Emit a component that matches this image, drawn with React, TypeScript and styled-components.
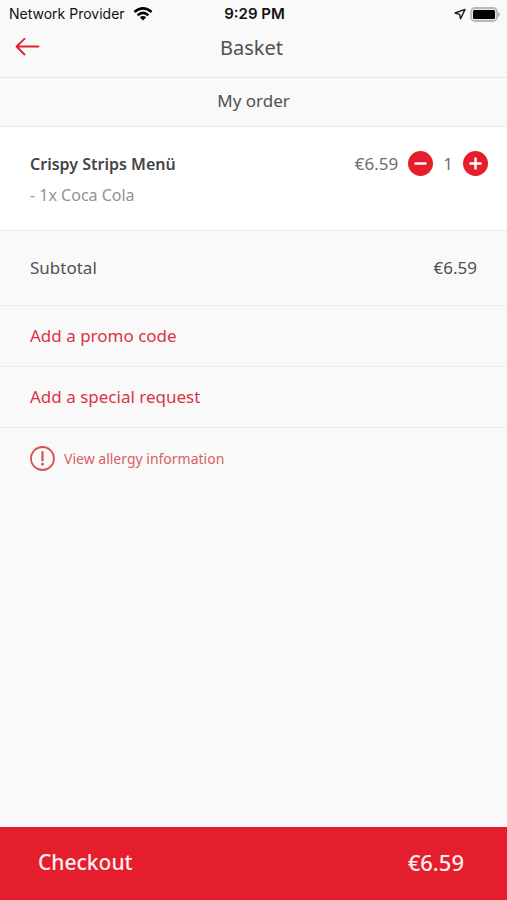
import { useState } from 'react';
import styled, { createGlobalStyle } from 'styled-components';

const red = '#e41e2d';
const line = '#ececec';
const ink = '#505052';

const GlobalStyle = createGlobalStyle`
  * { box-sizing: border-box; }
  body { margin: 0; background: #f9f9f9; }
  button { font: inherit; color: inherit; border: 0; padding: 0; background: none; cursor: pointer; }
  h1, h2, h3, p { margin: 0; font-weight: 400; }
  svg { display: block; }
`;

const Page = styled.div`
  display: flex;
  flex-direction: column;
  min-height: 100vh;
  background: #f9f9f9;
  color: ${ink};
  font-family: 'Noto Sans', sans-serif;
  font-size: 17px;
  line-height: 24px;
`;

const StatusBar = styled.div`
  display: grid;
  grid-template-columns: 1fr auto 1fr;
  align-items: center;
  padding: 4px 7px 4px 9px;
  color: #111;
  font-family: Inter, sans-serif;
  font-size: 14px;
  line-height: 20px;
`;

const StatusGroup = styled.div<{ $end?: boolean }>`
  display: flex;
  align-items: center;
  justify-content: ${(p) => (p.$end ? 'flex-end' : 'flex-start')};
  gap: ${(p) => (p.$end ? 4 : 8)}px;
`;

const Clock = styled.time`
  font-size: 15px;
  font-weight: 600;
`;

const Header = styled.header`
  display: grid;
  grid-template-columns: 1fr auto 1fr;
  align-items: center;
  padding: 4px 14px 14px;
  border-bottom: 1px solid #e4e4e4;
`;

const BackButton = styled.button`
  justify-self: start;
`;

const Title = styled.h1`
  padding-right: 4px;
  font-size: 20px;
  line-height: 31px;
`;

const SectionTitle = styled.h2`
  padding: 11px 16px 13px;
  border-bottom: 1px solid ${line};
  font-size: 17px;
  text-align: center;
`;

const Item = styled.section`
  display: flex;
  align-items: flex-start;
  justify-content: space-between;
  padding: 24px 19px 23px 30px;
  border-bottom: 1px solid ${line};
  background: #fff;
`;

const ItemName = styled.h3`
  color: #444446;
  font-size: 16px;
  font-weight: 600;
  line-height: 26px;
`;

const ItemOption = styled.p`
  padding-top: 6px;
  color: #929292;
  font-size: 16px;
`;

const Quantity = styled.div`
  display: flex;
  align-items: center;
  gap: 10px;
  color: #6c6f72;
  line-height: 25px;
`;

const RoundButton = styled.button`
  display: grid;
  place-items: center;
  width: 25px;
  height: 25px;
  border-radius: 50%;
  background: ${red};
`;

const Subtotal = styled.section`
  display: flex;
  justify-content: space-between;
  padding: 25px 30px;
  border-bottom: 1px solid ${line};
`;

const ActionRow = styled.button`
  padding: 18px 30px;
  border-bottom: 1px solid ${line};
  color: #d93444;
  text-align: left;
`;

const AllergyButton = styled.button`
  display: flex;
  align-items: center;
  align-self: flex-start;
  gap: 9px;
  margin: 18px 30px;
  color: #d8605f;
  font-size: 14px;
`;

const Checkout = styled.button`
  display: flex;
  justify-content: space-between;
  margin-top: auto;
  padding: 20px 43px 23px 38px;
  background: ${red};
  color: #ffeef0;
  font-size: 21px;
  font-weight: 500;
  line-height: 30px;
`;

const Total = styled.span`
  font-size: 22px;
`;

const WifiIcon = () => (
  <svg width="20" height="14" viewBox="0 0 20 14" aria-hidden="true">
    <g fill="none" stroke="#000" strokeWidth="2.5">
      <path d="M1.4 5Q10-2.2 18.6 5" />
      <path d="M4.6 8.2Q10 3.6 15.4 8.2" />
    </g>
    <path d="M6.8 10.3Q10 7.8 13.2 10.3L10 13.6Z" />
  </svg>
);

const LocationIcon = () => (
  <svg width="12" height="12" viewBox="0 0 12 12" fill="none" stroke="#222" strokeWidth="1.5" strokeLinejoin="round" aria-hidden="true">
    <path d="M1 5 11 1.4 6.6 10.8 5.6 6.4Z" />
  </svg>
);

const BatteryIcon = () => (
  <svg width="30" height="15" viewBox="0 0 30 15" aria-hidden="true">
    <rect x="1" y="1" width="26" height="13" rx="4" fill="#e6e6e6" stroke="#b9b9b9" strokeWidth="1.8" />
    <rect x="3" y="3" width="22" height="9" rx="1.5" />
    <path d="M28 5Q30 5.8 30 7.5T28 10Z" fill="#b4b4b4" />
  </svg>
);

const BackIcon = () => (
  <svg width="26" height="20" viewBox="0 0 26 20" fill="none" stroke={red} strokeWidth="1.8" strokeLinecap="round" strokeLinejoin="round" aria-hidden="true">
    <path d="M24.5 8.5H2.5M10.5.9 2.5 8.5 10.5 16.5" />
  </svg>
);

const SignIcon = ({ plus }: { plus?: boolean }) => (
  <svg width="13" height="13" viewBox="0 0 13 13" stroke="#fff" strokeWidth="2.4" aria-hidden="true">
    <path d={plus ? 'M.5 6.5H12.5M6.5.5V12.5' : 'M.5 6.5H12.5'} />
  </svg>
);

const AlertIcon = () => (
  <svg width="25" height="25" viewBox="0 0 25 25" fill="none" stroke="#d8504f" aria-hidden="true">
    <circle cx="12.5" cy="12.5" r="11.5" strokeWidth="1.8" />
    <path d="M12.5 6V14.5" strokeWidth="2.2" strokeLinecap="round" />
    <circle cx="12.5" cy="18.2" r="1.4" fill="#d8504f" stroke="none" />
  </svg>
);

export default function App() {
  const [count, setCount] = useState(1);
  const price = `€${(6.59 * count).toFixed(2)}`;

  return (
    <>
      <GlobalStyle />
      <Page>
        <StatusBar>
          <StatusGroup>
            <span>Network Provider</span>
            <WifiIcon />
          </StatusGroup>
          <Clock>9:29 PM</Clock>
          <StatusGroup $end>
            <LocationIcon />
            <BatteryIcon />
          </StatusGroup>
        </StatusBar>
        <Header>
          <BackButton type="button" aria-label="Back"><BackIcon /></BackButton>
          <Title>Basket</Title>
        </Header>
        <SectionTitle>My order</SectionTitle>
        <Item>
          <div>
            <ItemName>Crispy Strips Menü</ItemName>
            <ItemOption>- 1x Coca Cola</ItemOption>
          </div>
          <Quantity>
            <span>{price}</span>
            <RoundButton type="button" aria-label="Remove one" onClick={() => setCount(Math.max(1, count - 1))}>
              <SignIcon />
            </RoundButton>
            <span>{count}</span>
            <RoundButton type="button" aria-label="Add one" onClick={() => setCount(count + 1)}>
              <SignIcon plus />
            </RoundButton>
          </Quantity>
        </Item>
        <Subtotal>
          <span>Subtotal</span>
          <span>{price}</span>
        </Subtotal>
        <ActionRow type="button">Add a promo code</ActionRow>
        <ActionRow type="button">Add a special request</ActionRow>
        <AllergyButton type="button">
          <AlertIcon />
          <span>View allergy information</span>
        </AllergyButton>
        <Checkout type="button">
          <span>Checkout</span>
          <Total>{price}</Total>
        </Checkout>
      </Page>
    </>
  );
}
